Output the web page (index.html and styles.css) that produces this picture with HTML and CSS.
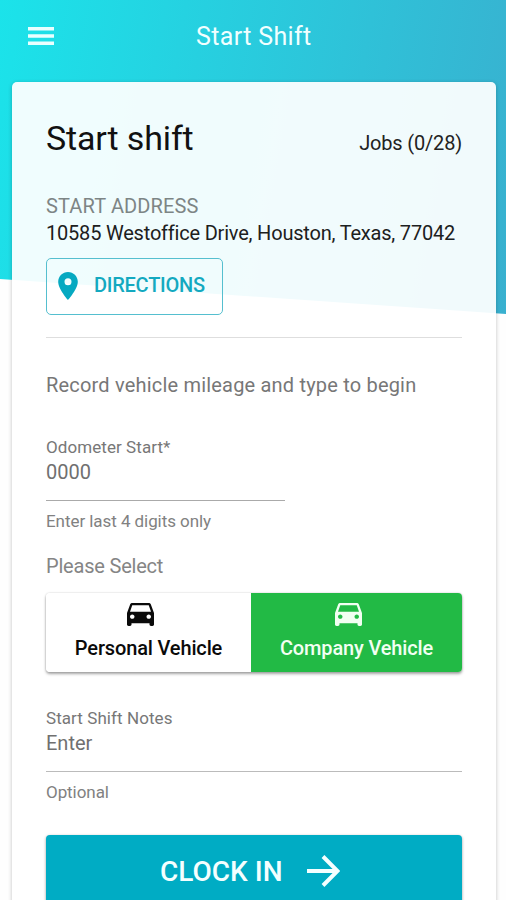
FILE: index.html
```
<!DOCTYPE html>
<html lang="en">
<head>
<meta charset="utf-8">
<title>Start Shift</title>
<link rel="stylesheet" href="styles.css">
</head>
<body>
<div class="app">
  <div class="backdrop"></div>
  <header class="bar">
    <svg class="menu" viewBox="0 0 26 18"><path d="M0 0h26v3.4H0zM0 7.3h26v3.4H0zM0 14.6h26V18H0z"/></svg>
    <span class="bar-title">Start Shift</span>
  </header>
  <main class="card">
    <div class="heading">
      <h1>Start shift</h1>
      <span class="jobs">Jobs (0/28)</span>
    </div>
    <div class="label">START ADDRESS</div>
    <div class="address">10585 Westoffice Drive, Houston, Texas, 77042</div>
    <button class="directions">
      <svg class="pin" viewBox="5 2 14 20"><path d="M12 2C8.13 2 5 5.13 5 9c0 5.25 7 13 7 13s7-7.75 7-13c0-3.87-3.13-7-7-7zm0 9.500a2.500 2.500 0 0 1 0-5 2.500 2.500 0 0 1 0 5z"/></svg>
      <span>DIRECTIONS</span>
    </button>
    <hr>
    <p class="prompt">Record vehicle mileage and type to begin</p>
    <div class="field odometer">
      <div class="caption">Odometer Start*</div>
      <div class="value">0000</div>
      <div class="hint">Enter last 4 digits only</div>
    </div>
    <p class="select">Please Select</p>
    <div class="toggle">
      <button class="option">
        <svg class="car" viewBox="3 5 18 16" preserveAspectRatio="none"><path d="M18.920 6.010C18.720 5.420 18.160 5 17.500 5h-11c-.66 0-1.210.42-1.420 1.010L3 12v8c0 .55.45 1 1 1h1c.55 0 1-.45 1-1v-1h12v1c0 .55.45 1 1 1h1c.55 0 1-.45 1-1v-8l-2.080-5.990zM6.500 16c-.83 0-1.500-.67-1.500-1.500S5.670 13 6.500 13s1.500.67 1.500 1.500S7.330 16 6.500 16zm11 0c-.83 0-1.500-.67-1.500-1.500s.67-1.500 1.500-1.500 1.500.67 1.500 1.500-.67 1.500-1.500 1.500zM5 11l1.500-4.500h11L19 11H5z"/></svg>
        <span>Personal Vehicle</span>
      </button>
      <button class="option selected">
        <svg class="car" viewBox="3 5 18 16" preserveAspectRatio="none"><path d="M18.920 6.010C18.720 5.420 18.160 5 17.500 5h-11c-.66 0-1.210.42-1.420 1.010L3 12v8c0 .55.45 1 1 1h1c.55 0 1-.45 1-1v-1h12v1c0 .55.45 1 1 1h1c.55 0 1-.45 1-1v-8l-2.080-5.990zM6.500 16c-.83 0-1.500-.67-1.500-1.500S5.670 13 6.500 13s1.500.67 1.500 1.500S7.330 16 6.500 16zm11 0c-.83 0-1.500-.67-1.500-1.500s.67-1.500 1.500-1.500 1.500.67 1.500 1.500-.67 1.500-1.500 1.500zM5 11l1.500-4.500h11L19 11H5z"/></svg>
        <span>Company Vehicle</span>
      </button>
    </div>
    <div class="field notes">
      <div class="caption">Start Shift Notes</div>
      <div class="value">Enter</div>
      <div class="hint">Optional</div>
    </div>
    <button class="clock">
      <span>CLOCK IN</span>
      <svg class="arrow" viewBox="0 0 33 32"><path d="M0 16h30M16 1.500L30.500 16 16 30.500"/></svg>
    </button>
  </main>
</div>
</body>
</html>
```
FILE: styles.css
```
* { box-sizing: border-box; }
body {
  margin: 0;
  font-family: Roboto, "Liberation Sans", sans-serif;
  background: #fefefe;
}
.app {
  position: relative;
  height: 900px;
  overflow: hidden;
}
.backdrop {
  position: absolute;
  inset: 0 0 auto;
  height: 314px;
  background: linear-gradient(100deg, #1be3ea 0%, #39b0cf 100%);
  clip-path: polygon(0 0, 100% 0, 100% 100%, 0 279px);
}
.bar {
  position: relative;
  display: grid;
  grid-template-columns: 168px 1fr;
  align-items: center;
  height: 82px;
  padding: 0 28px 10px;
}
.menu { width: 26px; height: 18px; fill: #e9ffff; }
.bar-title { margin-top: 2px; color: #f1ffff; font-size: 25px; line-height: 30px; letter-spacing: .36px; white-space: nowrap; }
.card {
  position: relative;
  height: 900px;
  margin: 0 10px 0 12px;
  padding: 34px 34px 0;
  border-radius: 5px;
  background: rgba(255, 255, 255, .935);
  box-shadow: 0 1px 4px rgba(0, 0, 0, .24);
}
.heading {
  display: flex;
  justify-content: space-between;
  align-items: baseline;
  height: 44px;
  white-space: nowrap;
}
h1 { margin: 0; font-size: 34px; font-weight: 400; line-height: 44px; letter-spacing: -.15px; color: #111; }
.jobs { font-size: 20px; letter-spacing: -.18px; color: #222; }
.label { margin-top: 33px; font-size: 20px; line-height: 26px; letter-spacing: .13px; color: #7d8585; }
.address { margin-top: 1px; font-size: 20px; line-height: 26px; letter-spacing: -.2px; color: #1c2020; white-space: nowrap; }
button { font-family: inherit; border: 0; padding: 0; }
.directions {
  display: flex;
  align-items: center;
  gap: 16px;
  width: 177px;
  height: 57px;
  margin-top: 12px;
  padding: 0 0 1px 11px;
  border: 1.500px solid #55bfcf;
  border-radius: 5px;
  background: transparent;
  color: #13a9c0;
  font-size: 20px;
  font-weight: 500;
  letter-spacing: -.25px;
}
.directions span { margin-top: -2px; }
.pin { width: 20px; height: 28px; fill: #06a9c1; }
hr { margin: 22px 0 0; border: 0; height: 1px; background: #dedede; }
p { margin: 0; font-size: 20px; line-height: 26px; color: #777; white-space: nowrap; }
.prompt { margin-top: 34px; letter-spacing: .19px; }
.field { color: #777; }
.odometer { margin-top: 38px; width: 239px; }
.caption { font-size: 17px; line-height: 22px; letter-spacing: .07px; }
.value { height: 43px; padding-top: 1px; font-size: 20px; line-height: 26px; color: #707070; border-bottom: 1px solid #aaa; }
.hint { margin-top: 9px; font-size: 17px; line-height: 22px; letter-spacing: -.06px; color: #818181; }
.select { margin-top: 21px; letter-spacing: -.2px; color: #858585; }
.toggle {
  display: flex;
  height: 79px;
  margin-top: 14px;
  border-radius: 4px;
  box-shadow: 0 2px 3px rgba(0, 0, 0, .35), 0 0 2px rgba(0, 0, 0, .2);
}
.option {
  display: flex;
  flex-direction: column;
  align-items: center;
  width: 205px;
  padding: 10px 17px 0 0;
  border-radius: 4px 0 0 4px;
  background: #fff;
  color: #0a0a0a;
  font-size: 20px;
  font-weight: 500;
  line-height: 26px;
  letter-spacing: -.15px;
}
.option span { margin: 9px -17px 0 0; white-space: nowrap; }
.option.selected { width: 211px; border-radius: 0 4px 4px 0; background: #22ba45; color: #f2fff2; }
.car { width: 27px; height: 23px; fill: currentColor; }
.notes { margin-top: 35px; }
.notes .value { border-bottom-color: #bbb; }
.clock {
  display: flex;
  align-items: center;
  gap: 24px;
  width: 416px;
  height: 74px;
  margin-top: 32px;
  padding: 0 0 2px 114px;
  border-radius: 4px;
  background: #00acc4;
  color: #f4ffff;
  font-size: 28px;
  font-weight: 500;
  box-shadow: 0 1px 3px rgba(0, 0, 0, .4);
}
.arrow { width: 33px; height: 32px; fill: none; stroke: #f4ffff; stroke-width: 4; }
```
